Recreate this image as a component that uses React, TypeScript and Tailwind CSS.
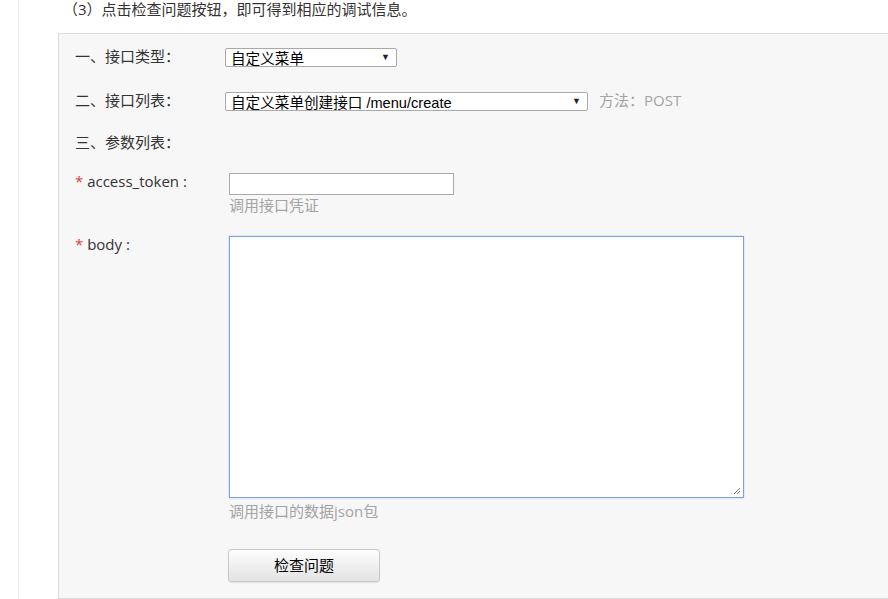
const ui = '"Open Sans", "Noto Sans CJK SC", sans-serif';
const ctl = '"Liberation Sans", "Noto Sans CJK SC", sans-serif';

function FakeSelect({ value, width }: { value: string; width: string }) {
  return (
    <div
      className={`${width} h-[19px] flex items-center justify-between bg-white border border-[#a9a9a9] rounded-[2px] pl-[5px] pr-[6px] text-[14.6px] text-black leading-none overflow-hidden`}
      style={{ fontFamily: ctl }}
    >
      <span className="pt-[4px] whitespace-nowrap">{value}</span>
      <span className="text-[9px] text-[#222]">▼</span>
    </div>
  );
}

function Label({ children }: { children: React.ReactNode }) {
  return (
    <div className="w-[150px] shrink-0 text-[15px] text-[#333] whitespace-nowrap -mt-[3px]">{children}</div>
  );
}

export default function App() {
  return (
    <div className="w-[888px] h-[599px] overflow-hidden bg-white relative" style={{ fontFamily: ui }}>
      <div className="flex h-full">
        <div className="w-[18px] shrink-0" />
        <div className="w-px shrink-0 bg-[#ececec]" />
        <div className="flex-1 flex flex-col">
          <p className="pl-[44px] h-[33px] text-[15px] leading-[18px] text-[#333] whitespace-nowrap">
            （3）点击检查问题按钮，即可得到相应的调试信息。
          </p>
          <div className="ml-[39px] -mr-10 flex-1 bg-[#f7f7f7] border border-[#dcdcdc] pl-[16px] pt-[14px]">
            <div className="flex items-center h-[19px]">
              <Label>一、接口类型：</Label>
              <FakeSelect value="自定义菜单" width="w-[172px]" />
            </div>
            <div className="flex items-center h-[19px] mt-[25px]">
              <Label>二、接口列表：</Label>
              <FakeSelect value="自定义菜单创建接口 /menu/create" width="w-[363px]" />
              <span className="ml-[11px] -mt-[3px] text-[15px] text-[#a3a3a3]">方法：POST</span>
            </div>
            <div className="flex items-center h-[19px] mt-[23px]">
              <Label>三、参数列表：</Label>
            </div>
            <div className="flex mt-[20px]">
              <Label>
                <div className="leading-[21px] pt-[1px]">
                  <span className="text-[#e0403a]">*</span> access_token :
                </div>
              </Label>
              <div className="ml-[4px]">
                <div className="w-[225px] h-[22px] bg-white border border-[#a9a9a9]" />
                <div className="text-[15px] leading-[20px] text-[#a3a3a3]">调用接口凭证</div>
              </div>
            </div>
            <div className="flex mt-[21px]">
              <Label>
                <div className="leading-[20px] pt-[1px]">
                  <span className="text-[#e0403a]">*</span> body :
                </div>
              </Label>
              <div className="ml-[4px]">
                <div className="relative w-[515px] h-[262px] bg-white border border-[#7b9fe0] shadow-[0_0_2px_rgba(123,159,224,0.4)]">
                  <svg className="absolute right-[2px] bottom-[2px]" width="9" height="9" viewBox="0 0 9 9">
                    <path d="M8 2 L2 8 M8 5 L5 8" stroke="#777" strokeWidth="1" />
                  </svg>
                </div>
                <div className="text-[15px] leading-[20px] mt-[3px] text-[#a3a3a3]">调用接口的数据json包</div>
              </div>
            </div>
            <div className="flex mt-[28px]">
              <div className="w-[150px] shrink-0" />
              <button
                className="ml-[3px] w-[152px] h-[33px] rounded-[3px] border border-[#c8c8c8] bg-gradient-to-b from-[#fdfdfd] to-[#e3e3e3] text-[15px] text-black shadow-[0_1px_1px_rgba(0,0,0,0.08)]"
              >
                检查问题
              </button>
            </div>
          </div>
        </div>
      </div>
    </div>
  );
}
